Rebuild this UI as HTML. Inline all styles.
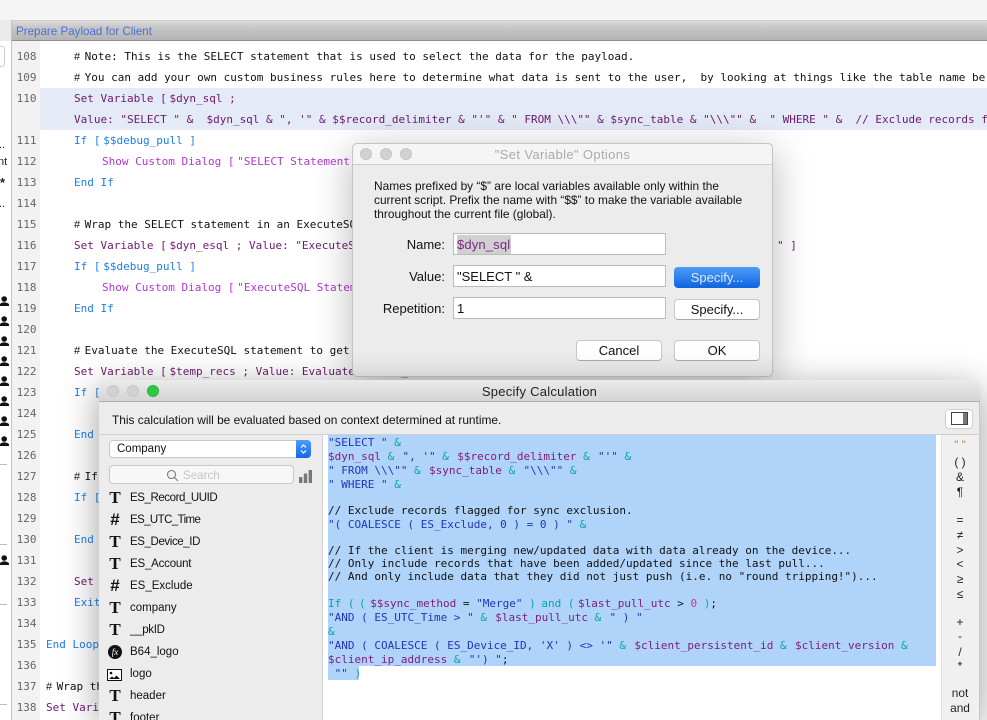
<!DOCTYPE html>
<html><head><meta charset="utf-8">
<style>
html,body{margin:0;padding:0;width:987px;height:720px;overflow:hidden;background:#fff}
body{position:relative;font-family:"Liberation Sans",sans-serif;color:#111;filter:blur(.3px)}
div{box-sizing:border-box}
.abs,.l,.n,.c,.f,.o,.t{position:absolute}
.l{font:11px/14px "DejaVu Sans Mono",monospace;white-space:pre;color:#111;margin-top:1px}
.n{left:12px;width:24.5px;text-align:right;font:11px/14px "DejaVu Sans Mono",monospace;color:#666;margin-top:1px}
.h{display:inline-block;width:10.6px;font-family:"Liberation Sans",sans-serif;font-size:11px}
.k{display:inline-block;width:9.4px}
.pu{color:#6b1a6e}.bl{color:#1c7fe6}.ma{color:#b236d2}
.c{font:11px/14px "DejaVu Sans Mono",monospace;white-space:pre;color:#111;left:328px;margin-top:1px}
.s{color:#2233b8}.v{color:#7d1a7d}.a{color:#06a3ab}.z{color:#c23d97}.bk{color:#111}
.m{margin-right:1.7px}
.f{left:130px;font-size:11.5px;line-height:14px;color:#111;margin-top:1px}
.i{position:absolute;left:107px;width:16px;text-align:center;font:bold 17px/18px "Liberation Serif",serif;color:#111;margin-top:1px}
.i.h2{font:bold 17px/18px "Liberation Sans",sans-serif}
.o{left:941px;width:38px;text-align:center;font-size:11.9px;line-height:14px;color:#222}
.dot{position:absolute;width:12px;height:12px;border-radius:50%;background:#d2d2d2;border:1px solid #c6c6c6}
.in{position:absolute;left:453px;width:213px;height:22px;background:#fff;border:1px solid #bcbcbc;font-size:13px;line-height:22px;padding-left:3px}
.lb{position:absolute;right:542px;font-size:13px;line-height:16px}
.bt{position:absolute;width:86px;height:21px;background:#fff;border-radius:4px;border:1px solid #c8c8c8;border-bottom-color:#aaa;text-align:center;font-size:13px;line-height:19px}
.sep{position:absolute;left:0;width:7px;height:1px;background:#bbb}
.sb{position:absolute;left:0;font-size:11px;line-height:14px;color:#222}
</style></head><body>

<!-- top toolbar -->
<div class="abs" style="left:0;top:0;width:987px;height:20px;background:#f5f5f5"></div>
<div class="abs" style="left:0;top:20px;width:987px;height:21px;background:linear-gradient(#dcdcdc,#c8c8c8 30%,#b4b4b4);border-bottom:1px solid #8f8f8f;border-top:1px solid #cfcfcf"></div>
<div class="abs" style="left:16px;top:25px;font-size:11.6px;line-height:14px;color:#4a6fd8">Prepare Payload for Client</div>

<!-- left sidebar -->
<div class="abs" style="left:0;top:41px;width:11px;height:679px;background:#fff"></div>
<div class="abs" style="left:0;top:20px;width:11px;height:21px;background:#ebebeb"></div>
<div class="abs" style="left:11px;top:20px;width:1px;height:700px;background:#c4c4c4"></div>
<div class="abs" style="left:-6px;top:46px;width:11px;height:21px;border:1px solid #ccc;border-radius:3px"></div>
<div class="sb" style="top:138px;left:-1px">..</div>
<div class="sb" style="top:155px;left:-2px">nt</div>
<div class="sb" style="top:176px;left:0;font-weight:bold;font-size:13px">*</div>
<div class="sb" style="top:197px;left:-1px">..</div>
<div class="sb" style="top:515px;left:-3px">t</div>
<svg class="abs" style="left:0;top:296px" width="9" height="280" fill="#111">
<g><circle cx="4.2" cy="3" r="2.8"/><path d="M0 10V8.6C0 7.2 2.6 6.4 4.2 6.4S9 7.2 9 8.6V10Z"/></g>
<g transform="translate(0,20)"><circle cx="4.2" cy="3" r="2.8"/><path d="M0 10V8.6C0 7.2 2.6 6.4 4.2 6.4S9 7.2 9 8.6V10Z"/></g>
<g transform="translate(0,40)"><circle cx="4.2" cy="3" r="2.8"/><path d="M0 10V8.6C0 7.2 2.6 6.4 4.2 6.4S9 7.2 9 8.6V10Z"/></g>
<g transform="translate(0,60)"><circle cx="4.2" cy="3" r="2.8"/><path d="M0 10V8.6C0 7.2 2.6 6.4 4.2 6.4S9 7.2 9 8.6V10Z"/></g>
<g transform="translate(0,80)"><circle cx="4.2" cy="3" r="2.8"/><path d="M0 10V8.6C0 7.2 2.6 6.4 4.2 6.4S9 7.2 9 8.6V10Z"/></g>
<g transform="translate(0,100)"><circle cx="4.2" cy="3" r="2.8"/><path d="M0 10V8.6C0 7.2 2.6 6.4 4.2 6.4S9 7.2 9 8.6V10Z"/></g>
<g transform="translate(0,120)"><circle cx="4.2" cy="3" r="2.8"/><path d="M0 10V8.6C0 7.2 2.6 6.4 4.2 6.4S9 7.2 9 8.6V10Z"/></g>
<g transform="translate(0,140)"><circle cx="4.2" cy="3" r="2.8"/><path d="M0 10V8.6C0 7.2 2.6 6.4 4.2 6.4S9 7.2 9 8.6V10Z"/></g>
<g transform="translate(0,259)"><circle cx="4.2" cy="3" r="2.8"/><path d="M0 10V8.6C0 7.2 2.6 6.4 4.2 6.4S9 7.2 9 8.6V10Z"/></g>
</svg>
<div class="sep" style="top:464px"></div>
<div class="sep" style="top:544px"></div>
<div class="sep" style="top:604px"></div>
<div class="sep" style="top:704px"></div>

<!-- gutter + code -->
<div class="abs" style="left:12px;top:41px;width:28px;height:679px;background:#f2f2f2"></div>
<div class="abs" style="left:40px;top:88px;width:947px;height:42px;background:#e4eaf6"></div>

<div class="n" style="top:49px">108</div><div class="n" style="top:70px">109</div><div class="n" style="top:91px">110</div>
<div class="n" style="top:133px">111</div><div class="n" style="top:154px">112</div><div class="n" style="top:175px">113</div>
<div class="n" style="top:196px">114</div><div class="n" style="top:217px">115</div><div class="n" style="top:238px">116</div>
<div class="n" style="top:259px">117</div><div class="n" style="top:280px">118</div><div class="n" style="top:301px">119</div>
<div class="n" style="top:322px">120</div><div class="n" style="top:343px">121</div><div class="n" style="top:364px">122</div>
<div class="n" style="top:385px">123</div><div class="n" style="top:406px">124</div><div class="n" style="top:427px">125</div>
<div class="n" style="top:448px">126</div><div class="n" style="top:469px">127</div><div class="n" style="top:490px">128</div>
<div class="n" style="top:511px">129</div><div class="n" style="top:532px">130</div><div class="n" style="top:553px">131</div>
<div class="n" style="top:574px">132</div><div class="n" style="top:595px">133</div><div class="n" style="top:616px">134</div>
<div class="n" style="top:637px">135</div><div class="n" style="top:658px">136</div><div class="n" style="top:679px">137</div>
<div class="n" style="top:700px">138</div>

<div class="l" style="left:74px;top:49px"><span class="h">#</span>Note: This is the SELECT statement that is used to select the data for the payload.</div>
<div class="l" style="left:74px;top:70px"><span class="h">#</span>You can add your own custom business rules here to determine what data is sent to the user,  by looking at things like the table name be</div>
<div class="l pu" style="left:74px;top:91px">Set Variable <span class="k">[ </span>$dyn_sql ;</div>
<div class="l pu" style="left:74px;top:112px">Value: "SELECT " &amp;  $dyn_sql &amp; ", '" &amp; $$record_delimiter &amp; "'" &amp; " FROM \\\"" &amp; $sync_table &amp; "\\\"" &amp;  " WHERE " &amp;  // Exclude records f</div>
<div class="l bl" style="left:74px;top:133px">If <span class="k">[ </span>$$debug_pull ]</div>
<div class="l ma" style="left:102px;top:154px">Show Custom Dialog <span class="k">[ </span>"SELECT Statement</div>
<div class="l bl" style="left:74px;top:175px">End If</div>
<div class="l" style="left:74px;top:217px"><span class="h">#</span>Wrap the SELECT statement in an ExecuteSQL</div>
<div class="l pu" style="left:74px;top:238px">Set Variable <span class="k">[ </span>$dyn_esql ; Value: "ExecuteSQL</div>
<div class="l pu" style="left:777px;top:238px">" ]</div>
<div class="l bl" style="left:74px;top:259px">If <span class="k">[ </span>$$debug_pull ]</div>
<div class="l ma" style="left:102px;top:280px">Show Custom Dialog <span class="k">[ </span>"ExecuteSQL Statement</div>
<div class="l bl" style="left:74px;top:301px">End If</div>
<div class="l" style="left:74px;top:343px"><span class="h">#</span>Evaluate the ExecuteSQL statement to get</div>
<div class="l pu" style="left:74px;top:364px">Set Variable <span class="k">[ </span>$temp_recs ; Value: Evaluate ( $dyn_esql ) ]</div>
<div class="l bl" style="left:74px;top:385px">If <span class="k">[ </span></div>
<div class="l bl" style="left:74px;top:427px">End If</div>
<div class="l" style="left:74px;top:469px"><span class="h">#</span>If</div>
<div class="l bl" style="left:74px;top:490px">If <span class="k">[ </span></div>
<div class="l bl" style="left:74px;top:532px">End If</div>
<div class="l pu" style="left:74px;top:574px">Set Variable</div>
<div class="l bl" style="left:74px;top:595px">Exit Loop</div>
<div class="l bl" style="left:46px;top:637px">End Loop</div>
<div class="l" style="left:46px;top:679px"><span class="h">#</span>Wrap the</div>
<div class="l pu" style="left:46px;top:700px">Set Variable</div>

<!-- Set Variable dialog -->
<div class="abs" style="left:352px;top:143px;width:421px;height:234px;background:#ececec;border-radius:5px;border:1px solid #c4c4c4;box-shadow:0 8px 40px rgba(0,0,0,.28)"></div>
<div class="abs" style="left:353px;top:144px;width:419px;height:21px;background:#f5f5f5;border-bottom:1px solid #d0d0d0;border-radius:5px 5px 0 0"></div>
<div class="dot" style="left:360px;top:148px"></div><div class="dot" style="left:380px;top:148px"></div><div class="dot" style="left:400px;top:148px"></div>
<div class="abs" style="left:353px;top:147px;width:419px;text-align:center;font-size:13px;letter-spacing:.36px;line-height:16px;color:#aaa">"Set Variable" Options</div>
<div class="abs" style="left:374px;top:179px;width:390px;font-size:11.9px;line-height:14px;color:#111;white-space:pre">Names prefixed by “$” are local variables available only within the
current script. Prefix the name with “$$” to make the variable available
throughout the current file (global).</div>
<div class="lb" style="top:237px">Name:</div>
<div class="lb" style="top:269px">Value:</div>
<div class="lb" style="top:301px">Repetition:</div>
<div class="in" style="top:233px"><span style="background:#d0d0d0;color:#7d2a7d;display:inline-block;line-height:19px;padding-right:1px;letter-spacing:.15px">$dyn_sql</span></div>
<div class="in" style="top:265px">"SELECT " &amp;</div>
<div class="in" style="top:297px">1</div>
<div class="bt" style="left:674px;top:267px;background:linear-gradient(#4d9df8,#0f64e0);border:none;color:#dfeaff;line-height:21px">Specify...</div>
<div class="bt" style="left:674px;top:299px">Specify...</div>
<div class="bt" style="left:576px;top:340px">Cancel</div>
<div class="bt" style="left:674px;top:340px">OK</div>

<!-- Specify Calculation window -->
<div class="abs" style="left:99px;top:380px;width:881px;height:340px;background:#fff;border-radius:5px 5px 0 0;box-shadow:0 8px 36px rgba(0,0,0,.38)"></div>
<div class="abs" style="left:99px;top:380px;width:881px;height:22px;background:linear-gradient(#ebebeb,#d4d4d4);border-bottom:1px solid #adadad;border-radius:5px 5px 0 0"></div>
<div class="dot" style="left:107px;top:385px"></div><div class="dot" style="left:127px;top:385px"></div>
<div class="dot" style="left:147px;top:385px;background:#2cc840;border-color:#25b838"></div>
<div class="abs" style="left:99px;top:384px;width:881px;text-align:center;font-size:13px;letter-spacing:.25px;line-height:16px;color:#222">Specify Calculation</div>
<div class="abs" style="left:99px;top:402px;width:881px;height:33px;background:#ececec;border-bottom:1px solid #d0d0d0"></div>
<div class="abs" style="left:112px;top:413px;font-size:11.9px;line-height:14px;color:#111">This calculation will be evaluated based on context determined at runtime.</div>
<div class="abs" style="left:945px;top:409px;width:28px;height:20px;background:#fff;border:1px solid #cfcfcf;border-radius:4px"></div>
<svg class="abs" style="left:951px;top:412px" width="17" height="14"><rect x=".5" y=".5" width="16" height="12" fill="#fff" stroke="#444"/><rect x="12" y="1" width="4" height="11" fill="#777"/></svg>

<!-- left pane -->
<div class="abs" style="left:99px;top:435px;width:224px;height:285px;background:#ececec;border-right:1px solid #d0d0d0"></div>
<div class="abs" style="left:109px;top:440px;width:202px;height:18px;background:#fff;border:1px solid #c8c8c8;border-radius:4px;font-size:11.5px;line-height:17px;padding-left:7px">Company</div>
<div class="abs" style="left:296px;top:440px;width:15px;height:18px;background:linear-gradient(#4d9df8,#1468e4);border-radius:0 4px 4px 0"></div>
<svg class="abs" style="left:299px;top:442px" width="9" height="14" fill="none" stroke="#fff" stroke-width="1.2"><path d="M2 5.5 4.5 3 7 5.5M2 8.5 4.5 11 7 8.5"/></svg>
<div class="abs" style="left:109px;top:465px;width:185px;height:19px;background:#f7f7f7;border:1px solid #c8c8c8;border-radius:4px"></div>
<svg class="abs" style="left:166px;top:469px" width="13" height="13" fill="none" stroke="#777" stroke-width="1.1"><circle cx="5.5" cy="5.5" r="4"/><path d="M8.5 8.5 12 12"/></svg>
<div class="abs" style="left:183px;top:469px;font-size:11.6px;line-height:14px;color:#c4c4c4">Search</div>
<svg class="abs" style="left:299px;top:470px" width="13" height="13" fill="#777"><rect x="0" y="7" width="3.4" height="6"/><rect x="4.8" y="3.5" width="3.4" height="9.5"/><rect x="9.6" y="0" width="3.4" height="13"/></svg>

<div class="i" style="top:488px">T</div><div class="f" style="top:490px;letter-spacing:-.43px">ES_Record_UUID</div>
<div class="i h2" style="top:510px">#</div><div class="f" style="top:512px;letter-spacing:-.6px">ES_UTC_Time</div>
<div class="i" style="top:532px">T</div><div class="f" style="top:534px;letter-spacing:-.4px">ES_Device_ID</div>
<div class="i" style="top:554px">T</div><div class="f" style="top:556px;letter-spacing:-.2px">ES_Account</div>
<div class="i h2" style="top:576px">#</div><div class="f" style="top:578px">ES_Exclude</div>
<div class="i" style="top:598px">T</div><div class="f" style="top:600px">company</div>
<div class="i" style="top:620px">T</div><div class="f" style="top:622px;letter-spacing:-.3px">__pkID</div>
<div class="abs" style="left:108px;top:645px;width:14px;height:14px;border-radius:50%;background:#111;color:#fff;font:italic 9px/14px 'Liberation Serif',serif;text-align:center">fx</div>
<div class="f" style="top:644px">B64_logo</div>
<svg class="abs" style="left:107px;top:669px" width="15" height="12"><rect x=".5" y=".5" width="14" height="11" fill="#fff" stroke="#111"/><circle cx="4" cy="4" r="1.3" fill="#111"/><path d="M2 10 5 7.5 7 9 9.5 6.5 13 10Z" fill="#111"/></svg>
<div class="f" style="top:666px">logo</div>
<div class="i" style="top:686px">T</div><div class="f" style="top:688px">header</div>
<div class="i" style="top:708px">T</div><div class="f" style="top:710px">footer</div>

<!-- calc text -->
<div class="abs" style="left:328px;top:435px;width:608px;height:231px;background:#b0d4f9"></div>
<div class="abs" style="left:328px;top:666px;width:31px;height:14px;background:#b0d4f9"></div>
<div class="c s" style="top:435px">"SELECT " <span class="a">&amp;</span></div>
<div class="c" style="top:449px"><span class="v">$dyn_sql</span> <span class="a m">&amp;</span> <span class="s">", '"</span> <span class="a m">&amp;</span> <span class="v">$$record_delimiter</span> <span class="a m">&amp;</span> <span class="s">"'"</span> <span class="a">&amp;</span></div>
<div class="c" style="top:463px"><span class="s">" FROM \\\""</span> <span class="a m">&amp;</span> <span class="v">$sync_table</span> <span class="a m">&amp;</span> <span class="s">"\\\""</span> <span class="a">&amp;</span></div>
<div class="c" style="top:477px"><span class="s">" WHERE "</span> <span class="a">&amp;</span></div>
<div class="c" style="top:503px">// Exclude records flagged for sync exclusion.</div>
<div class="c" style="top:517px"><span class="s">"( COALESCE ( ES_Exclude, 0 ) = 0 ) "</span> <span class="a">&amp;</span></div>
<div class="c" style="top:543px">// If the client is merging new/updated data with data already on the device...</div>
<div class="c" style="top:556px">// Only include records that have been added/updated since the last pull...</div>
<div class="c" style="top:569px">// And only include data that they did not just push (i.e. no "round tripping!")...</div>
<div class="c" style="top:596px"><span class="a">If <span style="margin-right:-2.1px">(</span> <span style="margin-right:-2.1px">(</span></span> <span class="v">$$sync_method</span> = <span class="s">"Merge"</span> <span class="a"><span style="margin-right:-1px">)</span> and <span style="margin-right:-3.2px">(</span></span> <span class="v">$last_pull_utc</span> &gt; <span class="z">0</span> <span class="a">)</span>;</div>
<div class="c" style="top:610px"><span class="s">"AND ( ES_UTC_Time &gt; "</span> <span class="a m">&amp;</span> <span class="v">$last_pull_utc</span> <span class="a m">&amp;</span> <span class="s">" ) "</span></div>
<div class="c a" style="top:624px">&amp;</div>
<div class="c" style="top:638px"><span class="s">"AND ( COALESCE ( ES_Device_ID, 'X' ) &lt;&gt; '"</span> <span class="a m">&amp;</span> <span class="v">$client_persistent_id</span> <span class="a m">&amp;</span> <span class="v">$client_version</span> <span class="a">&amp;</span></div>
<div class="c" style="top:652px"><span class="v">$client_ip_address</span> <span class="a m">&amp;</span> <span class="s">"') "</span>;</div>
<div class="c s" style="top:666px"> "" <span class="a">)</span></div>

<!-- right operator column -->
<div class="abs" style="left:941px;top:435px;width:38px;height:285px;background:#f0f0f0;border-left:1px solid #e2e2e2"></div>
<div class="abs" style="left:979px;top:402px;width:1px;height:318px;background:#c8c8c8"></div>
<div class="o" style="top:438px;color:#b98a55">" "</div>
<div class="o" style="top:455px">( )</div>
<div class="o" style="top:470px">&amp;</div>
<div class="o" style="top:485px">¶</div>
<div class="o" style="top:513px">=</div>
<div class="o" style="top:528px">≠</div>
<div class="o" style="top:543px">&gt;</div>
<div class="o" style="top:557px">&lt;</div>
<div class="o" style="top:572px">≥</div>
<div class="o" style="top:587px">≤</div>
<div class="o" style="top:615px">+</div>
<div class="o" style="top:629px">-</div>
<div class="o" style="top:645px">/</div>
<div class="o" style="top:659px">*</div>
<div class="o" style="top:686px">not</div>
<div class="o" style="top:701px">and</div>

</body></html>
